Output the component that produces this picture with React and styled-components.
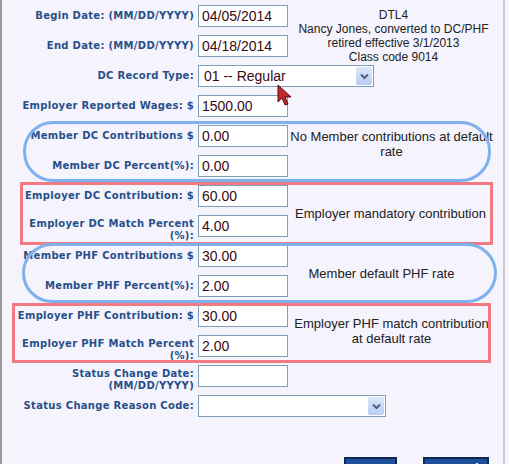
import React from 'react';
import styled, { createGlobalStyle } from 'styled-components';

const Global = createGlobalStyle`
  html, body { margin: 0; padding: 0; background: #f5f3fc; overflow: hidden; }
  body { width: 509px; height: 464px; }
`;

const Page = styled.div`
  height: 464px;
  box-sizing: border-box;
  border-left: 2px solid #9a9a9a;
  border-right: 2px solid #c8c8d0;
  margin-right: 4px;
  padding-top: 5px;
  font-family: "Liberation Sans", Arial, sans-serif;
`;

const Section = styled.div`
  position: relative;
  display: grid;
  grid-template-columns: 196px 92px 1fr;
  grid-auto-rows: 30px;
  &::before {
    content: '';
    position: absolute;
    top: ${p => p.$top || 0}px;
    bottom: ${p => p.$bottom || 0}px;
    left: ${p => p.$left || 0}px;
    right: ${p => p.$right || 0}px;
    border: ${p => (p.$frame ? `3px solid ${p.$frame}` : 'none')};
    border-radius: ${p => (p.$round ? '30px' : '0')};
    pointer-events: none;
  }
`;

const Label = styled.div`
  grid-column: 1;
  padding-right: 4px;
  text-align: right;
  font-family: "DejaVu Sans", Verdana, sans-serif;
  font-weight: bold;
  font-size: 10px;
  line-height: 12px;
  color: #27508a;
  letter-spacing: 0.3px;
  display: flex;
  align-items: ${p => (p.$top ? 'flex-start' : 'center')};
  justify-content: flex-end;
  padding-top: ${p => (p.$top ? '3px' : '0')};
  height: 22px;
`;

const Input = styled.div`
  grid-column: 2;
  width: 90px;
  height: 22px;
  box-sizing: border-box;
  border: 1px solid #7f9db9;
  background: #fff;
  font-size: 14px;
  color: #3a0a12;
  padding: 2px 3px;
  line-height: 17px;
`;

const Select = styled(Input)`
  grid-column: 2 / span 2;
  width: ${p => p.$w}px;
  display: flex;
  justify-content: space-between;
  align-items: center;
  padding: 1px 1px 1px 5px;
`;

const Arrow = styled.div`
  width: 16px;
  height: 18px;
  background: linear-gradient(#dbe6fa, #b9cdf3);
  border-radius: 2px;
  display: flex;
  align-items: center;
  justify-content: center;
`;

const Note = styled.div`
  grid-column: 3;
  grid-row: ${p => p.$rows};
  font-size: ${p => p.$size || 13}px;
  line-height: ${p => p.$lh || 15}px;
  color: #222;
  text-align: center;
  display: flex;
  flex-direction: column;
  justify-content: ${p => (p.$top ? 'flex-start' : 'center')};
  padding: ${p => p.$pad || '0'};
`;

const Spacer = styled.div`height: ${p => p.$h}px;`;

const Buttons = styled.div`
  display: flex;
  justify-content: flex-end;
  gap: 26px;
  padding-right: 14px;
`;

const Button = styled.div`
  background: #1d4f9a;
  border: 2px solid #0f2750;
  color: #fff;
  font-weight: bold;
  font-size: 14px;
  padding: 2px 8px;
  height: 22px;
`;

const Cursor = styled.svg`
  position: absolute;
  left: 277px;
  top: 84px;
`;

const DownArrow = () => (
  <svg width="9" height="7" viewBox="0 0 9 7">
    <path d="M1 1.5 L4.5 5 L8 1.5" stroke="#4d6185" strokeWidth="2" fill="none" />
  </svg>
);

const Row = ({ label, value, top }) => (
  <>
    <Label $top={top}>{label}</Label>
    <Input>{value}</Input>
  </>
);

export default function App() {
  return (
    <Page>
      <Global />
      <Section>
        <Row label="Begin Date: (MM/DD/YYYY)" value="04/05/2014" />
        <Note $rows="1 / span 2" $top $size={12} $lh={14} $pad="3px 6px 0 0">
          <span>DTL4</span>
          <span>Nancy Jones, converted to DC/PHF</span>
          <span>retired effective 3/1/2013</span>
          <span>Class code 9014</span>
        </Note>
        <Row label="End Date: (MM/DD/YYYY)" value="04/18/2014" />
        <Label>DC Record Type:</Label>
        <Select $w={176}>01 -- Regular<Arrow><DownArrow /></Arrow></Select>
        <Row label="Employer Reported Wages: $" value="1500.00" />
      </Section>
      <Section $frame="#7eb2ee" $round $top={-4} $bottom={3} $left={21} $right={12}>
        <Row label="Member DC Contributions $" value="0.00" />
        <Note $rows="1 / span 2" $top $pad="4px 10px 0 0">No Member contributions at default rate</Note>
        <Row label="Member DC Percent(%):" value="0.00" />
      </Section>
      <Section $frame="#f27b82" $top={-3} $bottom={0} $left={18} $right={10}>
        <Row label="Employer DC Contribution: $" value="60.00" />
        <Note $rows="1 / span 2" $pad="0 12px 4px 0">Employer mandatory contribution</Note>
        <Row label="Employer DC Match Percent (%):" value="4.00" top />
      </Section>
      <Section $frame="#7eb2ee" $round $top={-2} $bottom={2} $left={20} $right={6}>
        <Row label="Member PHF Contributions $" value="30.00" />
        <Note $rows="1 / span 2" $pad="0 30px 4px 0">Member default PHF rate</Note>
        <Row label="Member PHF Percent(%):" value="2.00" />
      </Section>
      <Section $frame="#f27b82" $top={-2} $bottom={2} $left={10} $right={12}>
        <Row label="Employer PHF Contribution: $" value="30.00" />
        <Note $rows="1 / span 2" $pad="0 10px 8px 0">Employer PHF match contribution at default rate</Note>
        <Row label="Employer PHF Match Percent (%):" value="2.00" top />
      </Section>
      <Section>
        <Label $top>Status Change Date: (MM/DD/YYYY)</Label>
        <Input />
        <Label>Status Change Reason Code:</Label>
        <Select $w={188}><span /><Arrow><DownArrow /></Arrow></Select>
      </Section>
      <Spacer $h={32} />
      <Buttons>
        <Button>Save</Button>
        <Button>Cancel</Button>
      </Buttons>
      <Cursor width="18" height="24" viewBox="0 0 18 24">
        <path d="M1 1 L1 18 L5 14 L8 21 L11 20 L8 13 L14 13 Z" fill="#c0282d" stroke="#5a0a0a" strokeWidth="1" />
      </Cursor>
    </Page>
  );
}
